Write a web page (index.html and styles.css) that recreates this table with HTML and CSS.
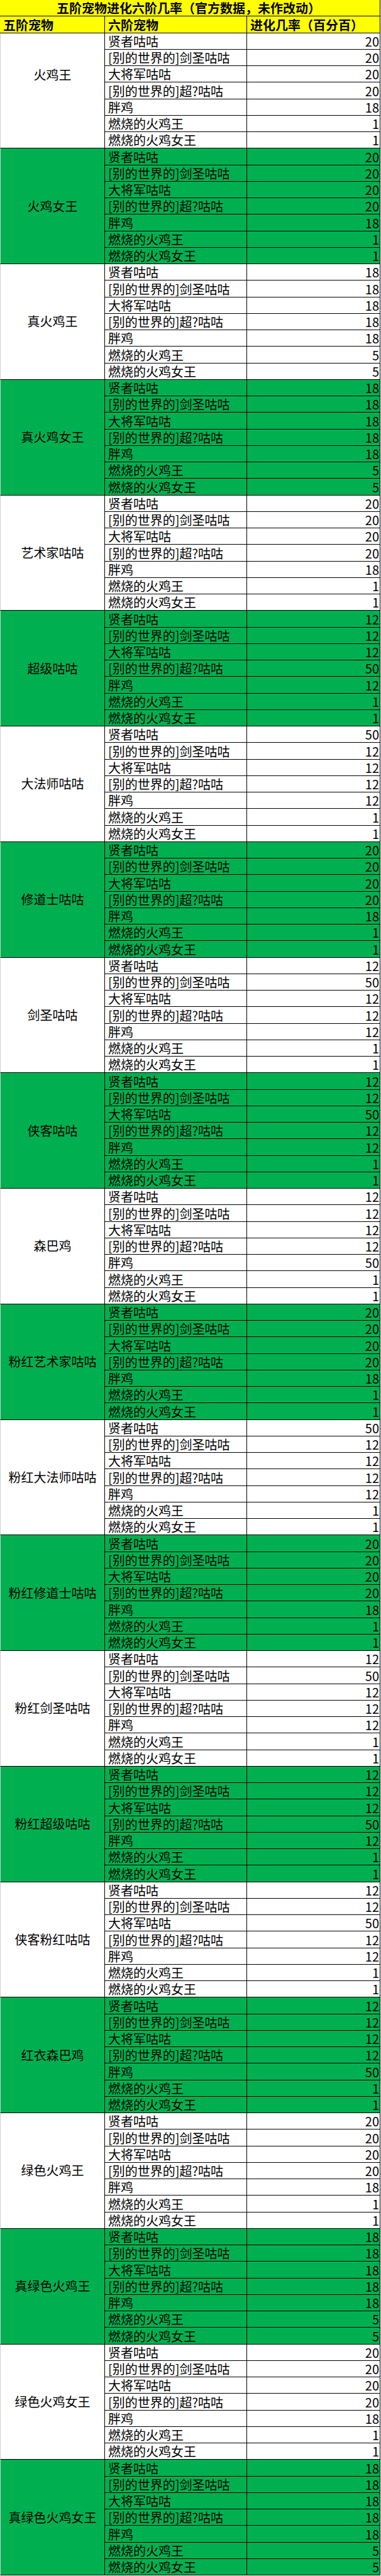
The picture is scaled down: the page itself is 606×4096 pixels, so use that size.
FILE: index.html
```html
<!DOCTYPE html>
<html lang="zh-CN">
<head>
<meta charset="utf-8">
<title>五阶宠物进化六阶几率</title>
<link rel="stylesheet" href="styles.css">
</head>
<body>
<div class="sheet">
  <div class="title"><span>五阶宠物进化六阶几率（官方数据，未作改动）</span></div>
  <div class="head">
    <div class="h">五阶宠物</div>
    <div class="h">六阶宠物</div>
    <div class="h last">进化几率（百分百）</div>
  </div>

  <div class="group">
    <div class="pet first">火鸡王</div>
    <div class="n">贤者咕咕</div><div class="r">20</div>
    <div class="n">[别的世界的]剑圣咕咕</div><div class="r">20</div>
    <div class="n">大将军咕咕</div><div class="r">20</div>
    <div class="n">[别的世界的]超?咕咕</div><div class="r">20</div>
    <div class="n">胖鸡</div><div class="r">18</div>
    <div class="n">燃烧的火鸡王</div><div class="r">1</div>
    <div class="n">燃烧的火鸡女王</div><div class="r">1</div>
  </div>

  <div class="group green">
    <div class="pet">火鸡女王</div>
    <div class="n">贤者咕咕</div><div class="r">20</div>
    <div class="n">[别的世界的]剑圣咕咕</div><div class="r">20</div>
    <div class="n">大将军咕咕</div><div class="r">20</div>
    <div class="n">[别的世界的]超?咕咕</div><div class="r">20</div>
    <div class="n">胖鸡</div><div class="r">18</div>
    <div class="n">燃烧的火鸡王</div><div class="r">1</div>
    <div class="n">燃烧的火鸡女王</div><div class="r">1</div>
  </div>

  <div class="group">
    <div class="pet">真火鸡王</div>
    <div class="n">贤者咕咕</div><div class="r">18</div>
    <div class="n">[别的世界的]剑圣咕咕</div><div class="r">18</div>
    <div class="n">大将军咕咕</div><div class="r">18</div>
    <div class="n">[别的世界的]超?咕咕</div><div class="r">18</div>
    <div class="n">胖鸡</div><div class="r">18</div>
    <div class="n">燃烧的火鸡王</div><div class="r">5</div>
    <div class="n">燃烧的火鸡女王</div><div class="r">5</div>
  </div>

  <div class="group green">
    <div class="pet">真火鸡女王</div>
    <div class="n">贤者咕咕</div><div class="r">18</div>
    <div class="n">[别的世界的]剑圣咕咕</div><div class="r">18</div>
    <div class="n">大将军咕咕</div><div class="r">18</div>
    <div class="n">[别的世界的]超?咕咕</div><div class="r">18</div>
    <div class="n">胖鸡</div><div class="r">18</div>
    <div class="n">燃烧的火鸡王</div><div class="r">5</div>
    <div class="n">燃烧的火鸡女王</div><div class="r">5</div>
  </div>

  <div class="group">
    <div class="pet">艺术家咕咕</div>
    <div class="n">贤者咕咕</div><div class="r">20</div>
    <div class="n">[别的世界的]剑圣咕咕</div><div class="r">20</div>
    <div class="n">大将军咕咕</div><div class="r">20</div>
    <div class="n">[别的世界的]超?咕咕</div><div class="r">20</div>
    <div class="n">胖鸡</div><div class="r">18</div>
    <div class="n">燃烧的火鸡王</div><div class="r">1</div>
    <div class="n">燃烧的火鸡女王</div><div class="r">1</div>
  </div>

  <div class="group green">
    <div class="pet">超级咕咕</div>
    <div class="n">贤者咕咕</div><div class="r">12</div>
    <div class="n">[别的世界的]剑圣咕咕</div><div class="r">12</div>
    <div class="n">大将军咕咕</div><div class="r">12</div>
    <div class="n">[别的世界的]超?咕咕</div><div class="r">50</div>
    <div class="n">胖鸡</div><div class="r">12</div>
    <div class="n">燃烧的火鸡王</div><div class="r">1</div>
    <div class="n">燃烧的火鸡女王</div><div class="r">1</div>
  </div>

  <div class="group">
    <div class="pet">大法师咕咕</div>
    <div class="n">贤者咕咕</div><div class="r">50</div>
    <div class="n">[别的世界的]剑圣咕咕</div><div class="r">12</div>
    <div class="n">大将军咕咕</div><div class="r">12</div>
    <div class="n">[别的世界的]超?咕咕</div><div class="r">12</div>
    <div class="n">胖鸡</div><div class="r">12</div>
    <div class="n">燃烧的火鸡王</div><div class="r">1</div>
    <div class="n">燃烧的火鸡女王</div><div class="r">1</div>
  </div>

  <div class="group green">
    <div class="pet">修道士咕咕</div>
    <div class="n">贤者咕咕</div><div class="r">20</div>
    <div class="n">[别的世界的]剑圣咕咕</div><div class="r">20</div>
    <div class="n">大将军咕咕</div><div class="r">20</div>
    <div class="n">[别的世界的]超?咕咕</div><div class="r">20</div>
    <div class="n">胖鸡</div><div class="r">18</div>
    <div class="n">燃烧的火鸡王</div><div class="r">1</div>
    <div class="n">燃烧的火鸡女王</div><div class="r">1</div>
  </div>

  <div class="group">
    <div class="pet">剑圣咕咕</div>
    <div class="n">贤者咕咕</div><div class="r">12</div>
    <div class="n">[别的世界的]剑圣咕咕</div><div class="r">50</div>
    <div class="n">大将军咕咕</div><div class="r">12</div>
    <div class="n">[别的世界的]超?咕咕</div><div class="r">12</div>
    <div class="n">胖鸡</div><div class="r">12</div>
    <div class="n">燃烧的火鸡王</div><div class="r">1</div>
    <div class="n">燃烧的火鸡女王</div><div class="r">1</div>
  </div>

  <div class="group green">
    <div class="pet">侠客咕咕</div>
    <div class="n">贤者咕咕</div><div class="r">12</div>
    <div class="n">[别的世界的]剑圣咕咕</div><div class="r">12</div>
    <div class="n">大将军咕咕</div><div class="r">50</div>
    <div class="n">[别的世界的]超?咕咕</div><div class="r">12</div>
    <div class="n">胖鸡</div><div class="r">12</div>
    <div class="n">燃烧的火鸡王</div><div class="r">1</div>
    <div class="n">燃烧的火鸡女王</div><div class="r">1</div>
  </div>

  <div class="group">
    <div class="pet">森巴鸡</div>
    <div class="n">贤者咕咕</div><div class="r">12</div>
    <div class="n">[别的世界的]剑圣咕咕</div><div class="r">12</div>
    <div class="n">大将军咕咕</div><div class="r">12</div>
    <div class="n">[别的世界的]超?咕咕</div><div class="r">12</div>
    <div class="n">胖鸡</div><div class="r">50</div>
    <div class="n">燃烧的火鸡王</div><div class="r">1</div>
    <div class="n">燃烧的火鸡女王</div><div class="r">1</div>
  </div>

  <div class="group green">
    <div class="pet">粉红艺术家咕咕</div>
    <div class="n">贤者咕咕</div><div class="r">20</div>
    <div class="n">[别的世界的]剑圣咕咕</div><div class="r">20</div>
    <div class="n">大将军咕咕</div><div class="r">20</div>
    <div class="n">[别的世界的]超?咕咕</div><div class="r">20</div>
    <div class="n">胖鸡</div><div class="r">18</div>
    <div class="n">燃烧的火鸡王</div><div class="r">1</div>
    <div class="n">燃烧的火鸡女王</div><div class="r">1</div>
  </div>

  <div class="group">
    <div class="pet">粉红大法师咕咕</div>
    <div class="n">贤者咕咕</div><div class="r">50</div>
    <div class="n">[别的世界的]剑圣咕咕</div><div class="r">12</div>
    <div class="n">大将军咕咕</div><div class="r">12</div>
    <div class="n">[别的世界的]超?咕咕</div><div class="r">12</div>
    <div class="n">胖鸡</div><div class="r">12</div>
    <div class="n">燃烧的火鸡王</div><div class="r">1</div>
    <div class="n">燃烧的火鸡女王</div><div class="r">1</div>
  </div>

  <div class="group green">
    <div class="pet">粉红修道士咕咕</div>
    <div class="n">贤者咕咕</div><div class="r">20</div>
    <div class="n">[别的世界的]剑圣咕咕</div><div class="r">20</div>
    <div class="n">大将军咕咕</div><div class="r">20</div>
    <div class="n">[别的世界的]超?咕咕</div><div class="r">20</div>
    <div class="n">胖鸡</div><div class="r">18</div>
    <div class="n">燃烧的火鸡王</div><div class="r">1</div>
    <div class="n">燃烧的火鸡女王</div><div class="r">1</div>
  </div>

  <div class="group">
    <div class="pet">粉红剑圣咕咕</div>
    <div class="n">贤者咕咕</div><div class="r">12</div>
    <div class="n">[别的世界的]剑圣咕咕</div><div class="r">50</div>
    <div class="n">大将军咕咕</div><div class="r">12</div>
    <div class="n">[别的世界的]超?咕咕</div><div class="r">12</div>
    <div class="n">胖鸡</div><div class="r">12</div>
    <div class="n">燃烧的火鸡王</div><div class="r">1</div>
    <div class="n">燃烧的火鸡女王</div><div class="r">1</div>
  </div>

  <div class="group green">
    <div class="pet">粉红超级咕咕</div>
    <div class="n">贤者咕咕</div><div class="r">12</div>
    <div class="n">[别的世界的]剑圣咕咕</div><div class="r">12</div>
    <div class="n">大将军咕咕</div><div class="r">12</div>
    <div class="n">[别的世界的]超?咕咕</div><div class="r">50</div>
    <div class="n">胖鸡</div><div class="r">12</div>
    <div class="n">燃烧的火鸡王</div><div class="r">1</div>
    <div class="n">燃烧的火鸡女王</div><div class="r">1</div>
  </div>

  <div class="group">
    <div class="pet">侠客粉红咕咕</div>
    <div class="n">贤者咕咕</div><div class="r">12</div>
    <div class="n">[别的世界的]剑圣咕咕</div><div class="r">12</div>
    <div class="n">大将军咕咕</div><div class="r">50</div>
    <div class="n">[别的世界的]超?咕咕</div><div class="r">12</div>
    <div class="n">胖鸡</div><div class="r">12</div>
    <div class="n">燃烧的火鸡王</div><div class="r">1</div>
    <div class="n">燃烧的火鸡女王</div><div class="r">1</div>
  </div>

  <div class="group green">
    <div class="pet">红衣森巴鸡</div>
    <div class="n">贤者咕咕</div><div class="r">12</div>
    <div class="n">[别的世界的]剑圣咕咕</div><div class="r">12</div>
    <div class="n">大将军咕咕</div><div class="r">12</div>
    <div class="n">[别的世界的]超?咕咕</div><div class="r">12</div>
    <div class="n">胖鸡</div><div class="r">50</div>
    <div class="n">燃烧的火鸡王</div><div class="r">1</div>
    <div class="n">燃烧的火鸡女王</div><div class="r">1</div>
  </div>

  <div class="group">
    <div class="pet">绿色火鸡王</div>
    <div class="n">贤者咕咕</div><div class="r">20</div>
    <div class="n">[别的世界的]剑圣咕咕</div><div class="r">20</div>
    <div class="n">大将军咕咕</div><div class="r">20</div>
    <div class="n">[别的世界的]超?咕咕</div><div class="r">20</div>
    <div class="n">胖鸡</div><div class="r">18</div>
    <div class="n">燃烧的火鸡王</div><div class="r">1</div>
    <div class="n">燃烧的火鸡女王</div><div class="r">1</div>
  </div>

  <div class="group green">
    <div class="pet">真绿色火鸡王</div>
    <div class="n">贤者咕咕</div><div class="r">18</div>
    <div class="n">[别的世界的]剑圣咕咕</div><div class="r">18</div>
    <div class="n">大将军咕咕</div><div class="r">18</div>
    <div class="n">[别的世界的]超?咕咕</div><div class="r">18</div>
    <div class="n">胖鸡</div><div class="r">18</div>
    <div class="n">燃烧的火鸡王</div><div class="r">5</div>
    <div class="n">燃烧的火鸡女王</div><div class="r">5</div>
  </div>

  <div class="group">
    <div class="pet">绿色火鸡女王</div>
    <div class="n">贤者咕咕</div><div class="r">20</div>
    <div class="n">[别的世界的]剑圣咕咕</div><div class="r">20</div>
    <div class="n">大将军咕咕</div><div class="r">20</div>
    <div class="n">[别的世界的]超?咕咕</div><div class="r">20</div>
    <div class="n">胖鸡</div><div class="r">18</div>
    <div class="n">燃烧的火鸡王</div><div class="r">1</div>
    <div class="n">燃烧的火鸡女王</div><div class="r">1</div>
  </div>

  <div class="group green">
    <div class="pet">真绿色火鸡女王</div>
    <div class="n">贤者咕咕</div><div class="r">18</div>
    <div class="n">[别的世界的]剑圣咕咕</div><div class="r">18</div>
    <div class="n">大将军咕咕</div><div class="r">18</div>
    <div class="n">[别的世界的]超?咕咕</div><div class="r">18</div>
    <div class="n">胖鸡</div><div class="r">18</div>
    <div class="n">燃烧的火鸡王</div><div class="r">5</div>
    <div class="n">燃烧的火鸡女王</div><div class="r">5</div>
  </div>
</div>
</body>
</html>
```

FILE: styles.css
```css
* {
  box-sizing: border-box;
}

html, body {
  margin: 0;
  padding: 0;
  background: #ffffff;
}

body {
  font-family: "Noto Sans CJK SC", "Noto Sans", "DejaVu Sans", sans-serif;
  font-size: 20px;
  color: #000000;
}

.sheet {
  width: 605px;
  border-right: 1px solid #000000;
}

.title {
  height: 26.25px;
  background: #ffff00;
  border-bottom: 1px solid #000000;
  font-weight: 700;
  line-height: 20px;
  display: flex;
  align-items: flex-end;
  justify-content: center;
  padding: 0 4px 2px 0;
  white-space: nowrap;
}

.head {
  display: grid;
  grid-template-columns: 167px 226px 1fr;
  height: 26.25px;
  background: #ffff00;
  border-bottom: 1px solid #000000;
}

.h {
  border-right: 1px solid #000000;
  font-weight: 700;
  line-height: 20px;
  display: flex;
  align-items: flex-end;
  padding: 0 0 2px 5px;
  white-space: nowrap;
}

.h.last {
  border-right: none;
}

.group {
  display: grid;
  grid-template-columns: 167px 226px 1fr;
  grid-template-rows: repeat(7, 26.25px);
  background: #ffffff;
}

.group.green {
  background: #00b050;
}

.pet {
  grid-column: 1;
  grid-row: 1 / 8;
  border-left: 1px solid #cfcfcf;
  border-right: 1px solid #000000;
  border-bottom: 1px solid #000000;
  display: flex;
  align-items: center;
  justify-content: center;
  line-height: 20px;
  white-space: nowrap;
}

.pet.first {
  padding-bottom: 49px;
}

.n {
  grid-column: 2;
  border-right: 1px solid #000000;
  border-bottom: 1px solid #000000;
  display: flex;
  align-items: flex-end;
  padding: 0 0 2px 5px;
  line-height: 20px;
  white-space: nowrap;
}

.r {
  grid-column: 3;
  border-bottom: 1px solid #000000;
  display: flex;
  align-items: flex-end;
  justify-content: flex-end;
  padding: 0 1px 2px 0;
  line-height: 20px;
}
```
